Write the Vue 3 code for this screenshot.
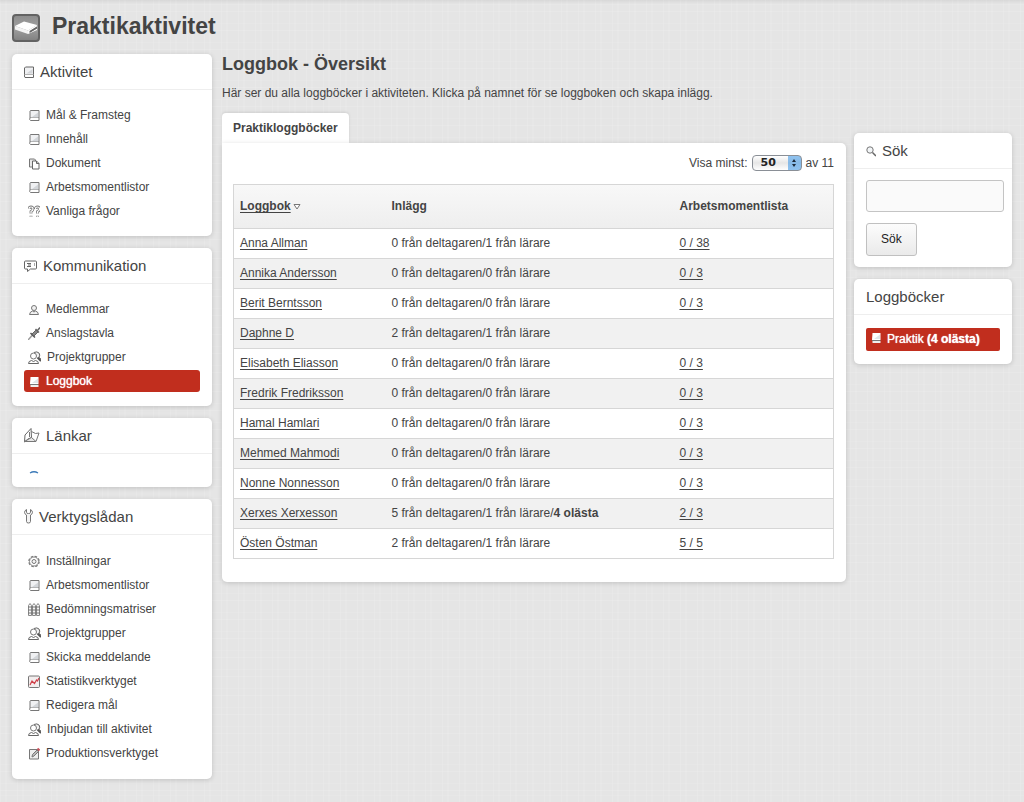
<script setup>
import { ref } from 'vue'

const book = '<path d="M2.500 1.500h8.500v7.500h-9V2z" fill="#f0f1f3" stroke="#777"/><path d="M4 8h6V3.500z" fill="#d3d6da"/><path d="M2 9q-1 1.500.5 2.500h8.500V9" fill="#fff" stroke="#777"/>'
const group = '<path d="M6 1.500q3-1.500 5 .5 1.500 2 0 4.500l2.500 2" fill="#eee" stroke="#666"/><path d="M9.500 6.500l3.500 3.500" stroke="#555" stroke-width="2"/><circle cx="5.500" cy="5" r="3" fill="#fff" stroke="#777"/><path d="M.5 12.500q0-2.500 3-3l2 1 2-1q3 .5 3 3z" fill="#fff" stroke="#666"/>'
const question = 'M1 4q0-2 2-2t2 2q0 1.500-2 2.500v2M3 10.800v1'
const questionRight = 'M7.500 4q0-2 2-2t2 2q0 1.500-2 2.500v2M9.500 10.800v1'

const icons = {
  book,
  group,
  headBook: '<path d="M1.500 1h8v7.500h-9V2z" fill="#f0f1f3" stroke="#666"/><path d="M2.500 7.500h6V3z" fill="#d3d6da"/><path d="M.5 8.500q-.5 1.500.5 3h8.500v-3" fill="#fff" stroke="#666"/>',
  whiteBook: '<path d="M2.500 2h8v7H2z" fill="#fff"/><path d="M4 8h6V3.500z" fill="#dfe6ea"/><path d="M2 9.500h8.500" stroke="#777"/><path d="M2.500 11h8" stroke="#eee" stroke-width="2"/>',
  docs: '<path d="M1.500 2h5l1 1v7h-6z" fill="#e8e8e8" stroke="#777"/><path d="M4.500 4h4l2.500 2.500V12H4.500z" fill="#fff" stroke="#666"/><path d="M8.500 4v2.500H11" stroke="#666"/>',
  questions: `<path d="${question}${questionRight}" stroke="#777" stroke-width="2.800"/><path d="${question}${questionRight}" stroke="#fff" stroke-width="1.200"/>`,
  chat: '<path d="M1.500 1h10q1 0 1 1v6q0 1-1 1h-5l-3 2.500V9h-2q-1 0-1-1V2q0-1 1-1z" fill="#fff" stroke="#666"/><path d="M3 3.500h4M4 5h3M3 6.500h4" stroke="#666"/><path d="M10.500 3v3" stroke="#aaa"/>',
  user: '<circle cx="6" cy="5" r="2.500" fill="#f2f2f2" stroke="#777"/><path d="M1.500 11.500q.5-3 3-3.500l1.500 1 1.500-1q2.500.5 3 3.500z" fill="#f2f2f2" stroke="#777"/>',
  pin: '<path d="M0 13l4.500-5" stroke="#999" stroke-width="1.500"/><path d="M2.500 6l4.500 4.500" stroke="#555" stroke-width="1.500"/><path d="M4 7l4-4 2 2-4 4z" fill="#888" stroke="#666"/><path d="M7.500 2l3.500 3.500M9.500 3.500L12 .5" stroke="#666" stroke-width="1.500"/>',
  links: '<path d="M1 7L7 .5l.5 9-3.500 1.500L.5 14z" fill="#fff" stroke="#666"/><path d="M7.500 3.500l4 2 3.500-.5-3 8.500H.5" stroke="#777"/><path d="M.5 13.500l7-4 4.500 4z" fill="#e6e6e6" stroke="#777"/><path d="M5.500 4v5" stroke="#777"/>',
  wrench: '<path d="M2.500.5q-2 1-2 3 0 1.500 2 2.500v6.500q0 1.500 2 1.500t2-1.500V6q2-1 2-2.500 0-2-2-3v3q0 1-2 1t-2-1z" fill="#f4f4f4" stroke="#777"/>',
  gear: '<circle cx="6" cy="6.500" r="5" stroke="#777" stroke-width="1.500" stroke-dasharray="2.500 1.430"/><circle cx="6" cy="6.500" r="4.500" fill="#fff" stroke="#888"/><circle cx="6" cy="6.500" r="2" fill="#f6f6f6" stroke="#777"/>',
  matrix: '<path d="M.5 2.500L2 .5l1.500 2v10h-3zM4.500 2.500L6 .5l1.500 2v10h-3zM8.500 2.500l1.500-2 1.500 2v10h-3z" fill="#f5f5f5" stroke="#888"/><path d="M0 4h12M0 7h12M0 10h12" stroke="#777"/>',
  stats: '<rect x=".5" y="1" width="11" height="11.500" rx="1" fill="#f2eded" stroke="#777"/><path d="M2 10l2-4 2.500 2.500L8.500 5l1 1L11 3" stroke="#d0404a" stroke-width="1.200"/>',
  edit: '<path d="M1.500 2.500h9V12h-9z" fill="#eee" stroke="#777"/><path d="M4 10l.5-2.500L9 3l1.500 1.500-4.500 4.500z" fill="#bbb" stroke="#777"/><path d="M9.500 1.500l2 2" stroke="#c8505a" stroke-width="2"/>',
  arc: '<path d="M2 3q4-2.500 8 0" stroke="#3c7ab8" stroke-width="1.300"/>',
  search: '<circle cx="4" cy="5" r="3.200" fill="#f2f5f7" stroke="#777"/><path d="M6.500 7.500l3.500 3.500" stroke="#666" stroke-width="1.500"/>'
}

const panels = [
  {
    title: 'Aktivitet', icon: 'headBook', w: 10, h: 12,
    items: [
      ['Mål & Framsteg', 'book'], ['Innehåll', 'book'], ['Dokument', 'docs'],
      ['Arbetsmomentlistor', 'book'], ['Vanliga frågor', 'questions']
    ]
  },
  {
    title: 'Kommunikation', icon: 'chat', w: 13, h: 12,
    items: [
      ['Medlemmar', 'user'], ['Anslagstavla', 'pin'], ['Projektgrupper', 'group'], ['Loggbok', 'whiteBook', true]
    ]
  },
  { title: 'Länkar', icon: 'links', w: 16, h: 15, items: [] },
  {
    title: 'Verktygslådan', icon: 'wrench', w: 9, h: 15,
    items: [
      ['Inställningar', 'gear'], ['Arbetsmomentlistor', 'book'], ['Bedömningsmatriser', 'matrix'],
      ['Projektgrupper', 'group'], ['Skicka meddelande', 'book'], ['Statistikverktyget', 'stats'],
      ['Redigera mål', 'book'], ['Inbjudan till aktivitet', 'group'], ['Produktionsverktyget', 'edit']
    ]
  }
]

const rows = [
  ['Anna Allman', 0, 1, '0 / 38'],
  ['Annika Andersson', 0, 0, '0 / 3'],
  ['Berit Berntsson', 0, 0, '0 / 3'],
  ['Daphne D', 2, 1, ''],
  ['Elisabeth Eliasson', 0, 0, '0 / 3'],
  ['Fredrik Fredriksson', 0, 0, '0 / 3'],
  ['Hamal Hamlari', 0, 0, '0 / 3'],
  ['Mehmed Mahmodi', 0, 0, '0 / 3'],
  ['Nonne Nonnesson', 0, 0, '0 / 3'],
  ['Xerxes Xerxesson', 5, 1, '2 / 3', '4 olästa'],
  ['Östen Östman', 2, 1, '5 / 5']
]

const pageSize = ref('50')
const query = ref('')
const iconWidth = (name) => (name === 'group' ? 13 : 12)
</script>

<template>
  <div class="page">
    <header class="top">
      <svg class="logo" width="28" height="28" viewBox="0 0 28 28" aria-hidden="true">
        <defs>
          <linearGradient id="logo-fill" x1="0" y1="0" x2="0" y2="1">
            <stop offset="0" stop-color="#8c8c8c" />
            <stop offset=".5" stop-color="#a0a0a0" />
            <stop offset="1" stop-color="#808080" />
          </linearGradient>
        </defs>
        <rect x="1" y="1" width="26" height="26" rx="3" fill="url(#logo-fill)" stroke="#636363" stroke-width="2" />
        <path d="M3 12l9-4.500 13 3.500-9 5.500z" fill="#fff" />
        <path d="M3 12l13 4.500V20L3 15.500z" fill="#f4f4f4" />
        <path d="M16 16.500l9-5.500v1.500l-7 4.500v1.500l7-4v1.500L16 20z" fill="#fff" />
        <path d="M17.500 17l7.500-4.500v2L17.500 19z" fill="#666" />
      </svg>
      <h1>Praktikaktivitet</h1>
    </header>

    <div class="columns">
      <nav class="side">
        <section v-for="p in panels" :key="p.title" class="panel">
          <h3 class="head">
            <svg :width="p.w" :height="p.h" :viewBox="`0 0 ${p.w} ${p.h}`" fill="none" aria-hidden="true" v-html="icons[p.icon]"></svg>
            {{ p.title }}
          </h3>
          <ul v-if="p.items.length" class="menu" :class="{ long: p.items.length > 5 }">
            <li v-for="[label, icon, active] in p.items" :key="label">
              <a href="#" :class="{ active }">
                <svg :width="iconWidth(icon)" height="13" :viewBox="`0 0 ${iconWidth(icon)} 13`" fill="none" aria-hidden="true" v-html="icons[icon]"></svg>
                {{ label }}
              </a>
            </li>
          </ul>
          <div v-else class="stub">
            <a href="#" aria-label="Länk">
              <svg width="12" height="5" viewBox="0 0 12 5" fill="none" v-html="icons.arc"></svg>
            </a>
          </div>
        </section>
      </nav>

      <main>
        <h2>Loggbok - Översikt</h2>
        <p class="intro">Här ser du alla loggböcker i aktiviteten. Klicka på namnet för se loggboken och skapa inlägg.</p>
        <a class="tab" href="#">Praktikloggböcker</a>
        <section class="panel sheet">
          <div class="pager">
            <label for="page-size">Visa minst:</label>
            <span class="picker">
              <select id="page-size" v-model="pageSize">
                <option>10</option>
                <option>25</option>
                <option>50</option>
              </select>
              <svg class="arrows" width="14" height="14" viewBox="0 0 14 14" aria-hidden="true">
                <path d="M7 3l2 3H5zM7 11l2-3H5z" fill="#1c2a3a" />
              </svg>
            </span>
            <span>av 11</span>
          </div>
          <table>
            <colgroup>
              <col class="c-name" />
              <col class="c-posts" />
              <col />
            </colgroup>
            <thead>
              <tr>
                <th scope="col">
                  <a href="#">Loggbok</a>
                  <svg class="sort" width="8" height="6" viewBox="0 0 8 6" aria-hidden="true">
                    <path d="M1 .5h6L4 5z" fill="#fff" stroke="#777" />
                  </svg>
                </th>
                <th scope="col">Inlägg</th>
                <th scope="col">Arbetsmomentlista</th>
              </tr>
            </thead>
            <tbody>
              <tr v-for="[name, own, teacher, done, unread] in rows" :key="name">
                <td><a href="#">{{ name }}</a></td>
                <td>{{ own }} från deltagaren/{{ teacher }} från lärare<template v-if="unread">/<b>{{ unread }}</b></template></td>
                <td><a v-if="done" href="#">{{ done }}</a></td>
              </tr>
            </tbody>
          </table>
        </section>
      </main>

      <aside class="extra">
        <section class="panel">
          <h3 class="head">
            <svg width="10" height="12" viewBox="0 0 10 12" fill="none" aria-hidden="true" v-html="icons.search"></svg>
            Sök
          </h3>
          <form class="search" @submit.prevent>
            <input v-model="query" type="text" aria-label="Sök" />
            <button type="submit">Sök</button>
          </form>
        </section>
        <section class="panel">
          <h3 class="head">Loggböcker</h3>
          <a class="active book-link" href="#">
            <svg width="12" height="13" viewBox="0 0 12 13" fill="none" aria-hidden="true" v-html="icons.whiteBook"></svg>
            <span>Praktik <b>(4 olästa)</b></span>
          </a>
        </section>
      </aside>
    </div>
  </div>
</template>

<style>
body {
  background-color: #e5e5e5;
  background-image:
    linear-gradient(rgba(0, 0, 0, .06), rgba(0, 0, 0, 0) 4px),
    repeating-linear-gradient(90deg, rgba(255, 255, 255, .1) 0 1px, transparent 1px 5px, rgba(255, 255, 255, .08) 5px 7px, transparent 7px 17px),
    repeating-linear-gradient(0deg, rgba(255, 255, 255, .1) 0 1px, transparent 1px 7px, rgba(255, 255, 255, .08) 7px 8px, transparent 8px 19px);
  background-repeat: no-repeat, repeat, repeat;
}
</style>

<style scoped>
.page {
  padding: 12px;
  font: 12px/15px "Liberation Sans", Arial, sans-serif;
  color: #444;
}
h1, h2, h3, p, ul { margin: 0; padding: 0; }
a { color: inherit; }
svg { flex: none; display: block; }

.top {
  display: flex;
  gap: 12px;
  height: 30px;
  margin-bottom: 12px;
}
.logo { margin-top: 2px; }
.top h1 { font-size: 23px; line-height: 28px; }

.columns {
  display: grid;
  grid-template-columns: 200px minmax(0, 1fr) 158px;
  align-items: start;
}
main { margin: 0 8px 0 10px; }
.side, .extra { display: grid; gap: 12px; }
.extra { padding-top: 79px; }

.panel {
  background: #fff;
  border-radius: 5px;
  box-shadow: 0 1px 5px rgba(0, 0, 0, .16);
}
.head {
  display: flex;
  align-items: center;
  gap: 6px;
  height: 35px;
  padding: 0 12px;
  border-bottom: 1px solid #eee;
  font-size: 15px;
  font-weight: normal;
}
.menu { list-style: none; padding: 13px 12px; }
.menu.long { padding: 14px 12px; }
.menu li { padding: 1px 0; }
.menu a {
  display: flex;
  align-items: center;
  gap: 6px;
  height: 22px;
  padding: 0 4px;
  border-radius: 3px;
  text-decoration: none;
}
.menu svg { margin-top: 1px; }
.menu .active, .book-link {
  background: #c12e1e;
  color: #fff;
  text-shadow: 0 0 1px #fff;
}
.stub { padding: 16px 16px 12px; }
.stub a { display: block; width: 12px; }

h2 { font-size: 18px; line-height: 20px; }
.intro { margin: 12px 0; }
.tab {
  display: inline-block;
  padding: 8px 11px 7px;
  border-radius: 4px 4px 0 0;
  background: #fff;
  box-shadow: 0 -1px 3px rgba(0, 0, 0, .1);
  font-weight: bold;
  text-decoration: none;
  vertical-align: top;
}
.sheet { padding: 11px 12px 23px 11px; border-top-left-radius: 0; position: relative; }
.pager {
  display: flex;
  justify-content: flex-end;
  align-items: center;
  gap: 4px;
  height: 18px;
  margin-bottom: 12px;
}
.picker { position: relative; }
.picker select {
  display: block;
  appearance: none;
  width: 50px;
  height: 16px;
  margin: 0;
  padding: 0 0 0 8px;
  border: 1px solid #8a8f96;
  border-radius: 4px;
  background: linear-gradient(90deg, transparent 35px, rgba(70, 155, 230, .6) 35px), linear-gradient(#fff, #e6e6e6 50%, #fff);
  color: #222;
  font: bold 11px/14px "DejaVu Sans", sans-serif;
}
.arrows { position: absolute; right: 1px; top: 1px; pointer-events: none; }

table {
  width: 100%;
  table-layout: fixed;
  border-collapse: collapse;
  border: 1px solid #d6d6d6;
}
.c-name { width: 152px; }
.c-posts { width: 48%; }
th, td { padding: 7px 6px; text-align: left; }
td { border-top: 1px solid #d6d6d6; }
th { padding: 14px 6px; }
thead tr { background: linear-gradient(#f8f8f8, #eee); }
tbody tr:nth-child(even) { background: #f1f1f1; }
table a { text-underline-offset: 2px; text-decoration-skip-ink: none; }
.sort { display: inline-block; margin-left: 2px; }

.search {
  display: grid;
  justify-items: start;
  gap: 11px;
  padding: 11px 8px 11px 12px;
}
.search input {
  box-sizing: border-box;
  width: 100%;
  height: 32px;
  padding: 0 6px;
  border: 1px solid #c4c4c4;
  border-radius: 3px;
  background: #fafafa;
  font: inherit;
}
.search button {
  height: 33px;
  padding: 0 14px;
  border: 1px solid #c0c0c0;
  border-radius: 3px;
  background: linear-gradient(#fcfcfc, #eaeaea);
  color: #222;
  font: inherit;
}
.extra .panel:last-child { padding-bottom: 13px; }
.book-link {
  display: flex;
  gap: 5px;
  height: 23px;
  margin: 13px 12px 0;
  padding: 0 4px;
  border-radius: 2px;
  line-height: 23px;
  text-decoration: none;
}
.book-link svg { margin-top: 3px; }
</style>
